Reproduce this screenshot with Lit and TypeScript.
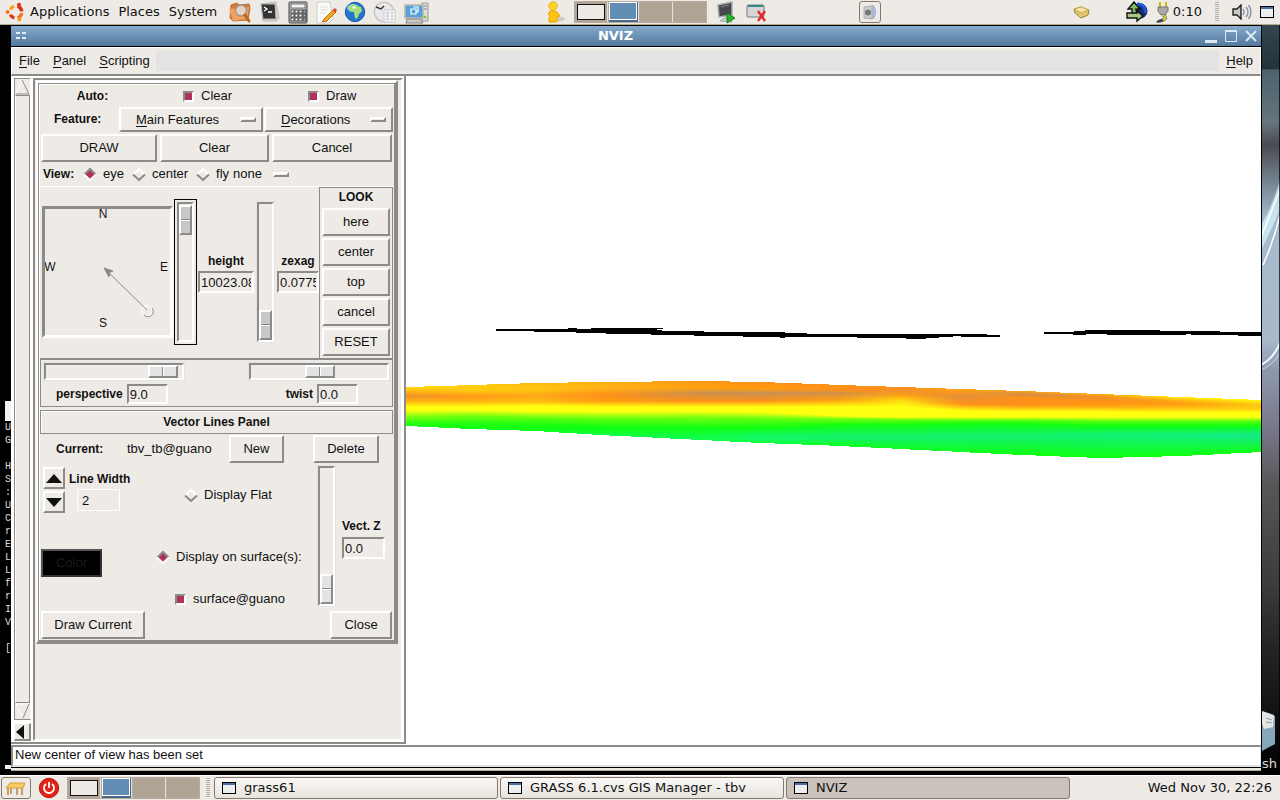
import { LitElement, html, css, svg } from "lit";
import { customElement } from "lit/decorators.js";

const diamond = (on: boolean) =>
  `url("data:image/svg+xml,${encodeURIComponent(
    `<svg xmlns='http://www.w3.org/2000/svg' width='14' height='14'><path d='M7 1L13 7L7 13L1 7Z' fill='${on ? "#b03060" : "#eeebe7"}'/><path d='M1.5 7.5L7 2L12.5 7.5' fill='none' stroke='${on ? "#8c8b89" : "#fff"}' stroke-width='2'/><path d='M1 7.5L7 13L13 7.5' fill='none' stroke='${on ? "#fff" : "#8c8b89"}' stroke-width='2'/></svg>`
  )}")`;

/* Top bar, bottom bar and their applets */
const icons = {
  ubuntu: svg`<svg width="20" height="20" viewBox="0 0 20 20" fill="none"><g stroke-width="3.4"><path d="M5.3 7.4A6 6 0 0 1 9 4.3" stroke="#f9a01b"/><path d="M12.5 4.2A6 6 0 0 1 16.7 9.5" stroke="#d9321e"/><path d="M16.7 11A6 6 0 0 1 12.6 15.8" stroke="#f47421"/><path d="M9.4 15.9A6 6 0 0 1 5.3 12.8" stroke="#d9321e"/></g><circle cx="2.6" cy="10" r="2" fill="#f47421"/><circle cx="14" cy="2.8" r="2" fill="#d9321e"/><circle cx="14.4" cy="17.4" r="2" fill="#f9a01b"/></svg>`,
  search: svg`<svg width="24" height="22" viewBox="0 0 24 22"><path d="M3 4l6-2 2 2 10-1 1 4-2 12-15 1L2 17z" fill="#d87a35" stroke="#b5703c"/><path d="M1 8l20-2-2 12-14 2z" fill="#f0a060"/><circle cx="13" cy="9.5" r="5.5" fill="#e3dedb" fill-opacity=".85" stroke="#a89484" stroke-width="1.5"/><path d="M17 14l4 6" stroke="#c0661a" stroke-width="3" stroke-linecap="round"/></svg>`,
  terminal: svg`<svg width="22" height="22" viewBox="0 0 22 22"><path d="M2 3l15-2 3 16-3 3H4z" fill="#d5d3cf" stroke="#bbb"/><path d="M2 3h14l1 15H4z" fill="#333" stroke="#b9b9b9"/><path d="M5 6l3 2-3 2M9 11h4" fill="none" stroke="#fff" stroke-width="1.3"/></svg>`,
  calc: svg`<svg width="20" height="23" viewBox="0 0 20 23"><rect x="1" y="1" width="18" height="21" rx="1" fill="#b9bfc3" stroke="#444"/><rect x="3" y="3" width="14" height="4" fill="#f2f4f1" stroke="#777"/>${[9, 13, 17].map((y) => [3, 7, 11, 15].map((x) => svg`<rect x=${x} y=${y} width="3" height="3" fill=${x === 15 ? "#9fb2bf" : "#f5f5f5"} stroke="#333" stroke-width=".8"/>`))}</svg>`,
  notes: svg`<svg width="22" height="23" viewBox="0 0 22 23"><path d="M2 1h13l3 17-4 4H2z" fill="#fbfbfa" stroke="#cfccc8"/><path d="M5 6h8M5 9h8M5 12h6" stroke="#ddd"/><path d="M19 8l-9 9-3 4 5-1 9-9z" fill="#f5a623" stroke="#c06d0c"/><path d="M18 9l2-2 2 2-2 3z" fill="#dc4b38"/></svg>`,
  globe: svg`<svg width="22" height="22" viewBox="0 0 22 22"><circle cx="11" cy="11" r="9.7" fill="#2277cc" stroke="#1b5ba4"/><ellipse cx="9" cy="7" rx="6" ry="4" fill="#76c6f4"/><path d="M5 5l5-2 3 2 4 1 1 4-3 3-2 5-2-1-1-6-4-1-2-3z" fill="#a9dc7c"/><path d="M8 6l3-1 1 2-3 1z" fill="#eef9df"/></svg>`,
  clockdoc: svg`<svg width="24" height="23" viewBox="0 0 24 23"><circle cx="11" cy="11" r="9.7" fill="#e9e9ea" stroke="#c5c6c9" stroke-width="1.5"/><path d="M3 6l5 2 3-3" stroke="#333" fill="none" stroke-width="1.4"/><path d="M11 9h11v12H11z" fill="#f5f5f6" stroke="#c8cad0"/><path d="M13 12h3M18 12h2M13 15h3M13 18h3M18 15h2M18 18h2" stroke="#cdd1d9" stroke-width="2"/></svg>`,
  monitors: svg`<svg width="26" height="23" viewBox="0 0 26 23"><path d="M18 2h6v18h-6z" fill="#dedfd9" stroke="#999"/><path d="M20 5h3M20 8h3" stroke="#888"/><rect x="1" y="4" width="18" height="13" fill="#58a0d8" stroke="#b7b9b4" stroke-width="1.6"/><path d="M7 8h5v5H7zM9 6h5v5h-2" fill="none" stroke="#fff" stroke-width="1.2"/><path d="M3 18h14l2 4H2z" fill="#c8c9c1" stroke="#888"/><circle cx="21" cy="16" r="1.5" fill="#7bd32c"/></svg>`,
  user: svg`<svg width="18" height="22" viewBox="0 0 18 22"><ellipse cx="12" cy="18" rx="6" ry="2.5" fill="#cfccc8"/><circle cx="6" cy="5" r="4.2" fill="#ffd42a" stroke="#f0b010"/><path d="M3 10q4-1 7 1l3 4-3 1v5H2v-4l1-2-2-2z" fill="#ffc414" stroke="#e8a400"/></svg>`,
  run: svg`<svg width="21" height="23" viewBox="0 0 21 23"><path d="M2 4l14-3v13l-13 2z" fill="#45494b" stroke="#a9aaa8" stroke-width="1.5"/><path d="M5 6l8-2" stroke="#888"/><path d="M4 20l4-3h6l2 4z" fill="#c9c9c6" stroke="#aaa"/><path d="M11 12l8 5-8 5z" fill="#26b52b" stroke="#138019"/></svg>`,
  killwin: svg`<svg width="21" height="20" viewBox="0 0 21 20"><rect x="1" y="3" width="17" height="12" rx="1" fill="#d4d6d5" stroke="#777"/><path d="M2 3h15v2H2z" fill="#348a84"/><path d="M12 9l7 10M19 9l-7 10" stroke="#e62222" stroke-width="2.3"/></svg>`,
  volumebox: svg`<svg width="18" height="16" viewBox="0 0 18 16"><path d="M3 3l8-1v13l-8-1z" fill="#ccc" stroke="#aaa"/><circle cx="7" cy="8.500" r="3" fill="#777"/><path d="M12 1q5 7 0 14z" fill="#b5c6e6" stroke="#94a9cf"/></svg>`,
  box: svg`<svg width="18" height="14" viewBox="0 0 18 14"><path d="M1 4l7-2 8 3-1 5-7 3-6-5z" fill="#e3c66b" stroke="#98813b"/><path d="M1 4l7 4 8-3-8-3z" fill="#f4e6a2" stroke="#c2a953"/></svg>`,
  sync: svg`<svg width="24" height="22" viewBox="0 0 24 22"><circle cx="15" cy="10" r="7.5" fill="#1b2b66"/><path d="M9 1l6 7h-3v5H7V8H3z" fill="#82b66b" stroke="#111" stroke-width="1.4"/><path d="M2 12h10l-1-3 7 6-6 5v-3H2z" fill="#a6c98b" stroke="#111" stroke-width="1.4"/><path d="M12 3q9 0 8 9" fill="none" stroke="#1b58e0" stroke-width="3"/></svg>`,
  plug: svg`<svg width="14" height="22" viewBox="0 0 14 22"><path d="M4 1v6M10 1v6" stroke="#c7b800" stroke-width="2"/><path d="M2 6h10v4l-3 4H5l-3-4z" fill="#a8a8a8" stroke="#777"/><path d="M7 14q5 3 0 5t-6 1" fill="none" stroke="#444" stroke-width="3"/><path d="M7 14q5 3 0 5" fill="none" stroke="#e5dd25" stroke-width="2"/></svg>`,
  speaker: svg`<svg width="21" height="16" viewBox="0 0 21 16"><path d="M2 5h4l4-4v14l-4-4H2z" fill="#c9cac8" stroke="#222" stroke-width="1.4"/><path d="M12 5q2 3 0 6M15 3q4 5 0 10M17.500 1q5 7 0 14" fill="none" stroke="#8f8faa" stroke-width="1.4"/></svg>`,
  win: svg`<svg width="16" height="14" viewBox="0 0 16 14"><rect x="1.5" y="1.5" width="13" height="11" fill="#eceef0" stroke="#000"/><path d="M2 3h12" stroke="#4a6fa0" stroke-width="2"/></svg>`,
  desk: svg`<svg width="22" height="16" viewBox="0 0 22 16"><path d="M6 6v8M17 7v8M3 7v8M12 8v7" stroke="#c08a4c" stroke-width="1.6"/><path d="M5 3h15l-2 5H1z" fill="#f7cb5d" stroke="#d29f38"/></svg>`,
  power: svg`<svg width="22" height="22" viewBox="0 0 22 22"><circle cx="11" cy="11" r="9.7" fill="#e42318" stroke="#b51710"/><path d="M8 7a5 5 0 1 0 6 0M11 5v6" fill="none" stroke="#fff" stroke-width="1.8"/></svg>`,
};

const shared = css`
  :host { box-sizing: border-box; font: 13px/16px "DejaVu Sans", sans-serif; color: #111; }
  * { box-sizing: border-box; }
  svg { display: block; flex: none; }
  button { font: inherit; color: inherit; margin: 0; padding: 0; border: 0; background: none; border-radius: 0; }
`;

@customElement("workspace-switcher")
class WorkspaceSwitcher extends LitElement {
  static styles = [shared, css`
    :host { display: flex; width: 133px; height: 22px; padding: 1px; background: #b9ac9c; gap: 1px; }
    .ws { flex: 1; background: #b0a595; padding: 2px; border-right: 1px solid #e5dfd7; }
    .ws:last-child { border-right: 0; }
    .ws.on { background: #48698a; padding: 0 1px 2px 0; }
    .mini { display: block; height: 100%; border: 1px solid #111; background: #eeebe7; }
    .on .mini { background: #628db5; border-color: #fff; }
  `];
  render() {
    return [1, 2, 3, 4].map((n) => html`<button class="ws ${n === 2 ? "on" : ""}" aria-label="Workspace ${n}">${n < 3 ? html`<span class="mini"></span>` : ""}</button>`);
  }
}

@customElement("top-panel")
class TopPanel extends LitElement {
  static styles = [shared, css`
    :host { display: flex; align-items: center; height: 25px; background: #eeebe7; border-bottom: 1px solid #b3aa8e; padding: 0 5px; }
    .group { display: flex; align-items: center; }
    .menus { gap: 9px; }
    .menus button:first-child { display: flex; align-items: center; gap: 5px; }
    .launch { gap: 7px; margin-left: 11px; }
    .gap-a { flex: 117; }
    .gap-b { flex: 191; }
    .mid { gap: 9px; }
    .vol { margin-left: 92px; width: 22px; height: 22px; border: 1px solid #85786a; border-radius: 3px; display: flex; align-items: center; justify-content: center; }
    .tray { gap: 7px; }
    .box { margin-right: 27px; }
    .time { margin-left: -4px; }
    .grip { width: 4px; height: 20px; margin: 0 5px 0 6px; background: repeating-linear-gradient(#b9aca0 0 1px, #eeebe7 1px 2px); }
  `];
  render() {
    return html`
      <nav class="group menus"><button>${icons.ubuntu}Applications</button><button>Places</button><button>System</button></nav>
      <div class="group launch">${icons.search}${icons.terminal}${icons.calc}${icons.notes}${icons.globe}${icons.clockdoc}${icons.monitors}</div>
      <span class="gap-a"></span>
      <div class="group mid">${icons.user}<workspace-switcher></workspace-switcher>${icons.run}${icons.killwin}</div>
      <button class="vol" aria-label="Volume">${icons.volumebox}</button>
      <span class="gap-b"></span>
      <div class="group tray"><span class="box">${icons.box}</span>${icons.sync}${icons.plug}<span class="time">0:10</span><span class="grip"></span>${icons.speaker}${icons.win}</div>`;
  }
}

@customElement("task-panel")
class TaskPanel extends LitElement {
  static styles = [shared, css`
    :host { display: flex; align-items: center; height: 25px; background: #eeebe7; border-top: 1px solid #fff; padding: 0 8px 0 1px; }
    .desk { width: 30px; height: 22px; border: 1px solid #85786a; border-radius: 3px; display: flex; align-items: center; justify-content: center; }
    .power { margin: 0 7px; }
    .grip { width: 4px; height: 20px; margin: 0 4px 0 6px; background: repeating-linear-gradient(#b9aca0 0 1px, #eeebe7 1px 2px); }
    .tasks { display: flex; flex: 1; gap: 2px; }
    .task { flex: 0 1 284px; height: 22px; padding: 0 6px; display: flex; align-items: center; gap: 7px; border: 1px solid #85786a; border-radius: 3px; background: linear-gradient(#faf9f7, #e7e2dc); }
    .task.on { background: #c9c3bc; }
  `];
  render() {
    return html`
      <button class="desk" aria-label="Show desktop">${icons.desk}</button>
      <button class="power" aria-label="Power">${icons.power}</button>
      <workspace-switcher></workspace-switcher><span class="grip"></span>
      <div class="tasks">
        <button class="task">${icons.win}grass61</button>
        <button class="task">${icons.win}GRASS 6.1.cvs GIS Manager - tbv</button>
        <button class="task on">${icons.win}NVIZ</button>
      </div>
      <time>Wed Nov 30, 22:26</time>`;
  }
}

/* Terrain cross-section: each column lists the height of every colour band */
type Column = { x: number; y: number[]; c: string[] };
const col = (x: number, spec: string): Column => {
  const parts = spec.split(" ").map((p) => p.split(":"));
  return { x, y: parts.map((p) => +p[0]), c: parts.map((p) => p[1]) };
};
const terrain: Column[] = [
  col(406, "387:ffe010 392:ffb010 396:f09030 401:ffb010 407:ffff10 410:ffff10 416:90ff10 421:40ff10 424:20ff10 426:10ff20"),
  col(470, "385:ffd010 391:ffc810 396:ff9818 401:ffb010 407:ffff10 410:ffff10 416:70ff10 422:30ff10 426:18ff10 429:10ff18"),
  col(533, "383:ffb810 389:ffc810 396:ffa818 402:ffc010 406:ffff10 411:ffff10 418:60ff10 425:18ff10 428:10ff10 431:10ff20"),
  col(600, "382:ffb010 388:ffb418 395:ff9018 401:ff9c10 407:ffff10 411:ffff10 419:60ff10 427:10ff10 431:10ff20 435:10ff48"),
  col(700, "381:ff9818 388:ffa010 393:c89050 401:ff9018 407:ffff10 411:ffff10 418:70ff10 428:10ff10 435:10ff40 440:10ff50"),
  col(760, "382:ff9018 389:ff9c10 393:c89058 401:ff9018 407:ffff10 412:ffff10 419:60ff10 428:10ff10 437:14f870 443:10ff40"),
  col(840, "385:ff9018 390:ff9018 393:d09048 400:ffa010 407:ffff10 416:ffff10 419:70ff10 425:10ff10 437:14f070 446:10ff20"),
  col(900, "387:ff9018 391:f09030 395:ffa010 401:ffe010 407:ffff10 417:ffff10 420:60ff10 425:10ff10 437:14f070 449:10ff20"),
  col(960, "389:ffa818 392:ff9818 396:e09040 404:ff9018 411:ffff10 417:ffff10 420:60ff10 424:10ff10 436:14f070 452:10ff20"),
  col(1020, "391:ffa018 394:d09048 398:ff9018 405:ff9018 412:ffff10 417:ffff10 420:60ff10 424:10ff10 436:14f070 455:10ff10"),
  col(1100, "394:ffb010 397:f09028 401:ff9018 406:ffa010 412:ffff10 417:ffff10 421:60ff10 426:10ff10 435:14f078 458:10ff10"),
  col(1180, "397:fff010 401:ffb010 404:ff9810 408:ffc010 413:ffff10 417:ffff10 421:60ff10 426:10ff10 435:14f080 456:10ff10"),
  col(1261, "400:ffff10 403:ffd810 405:ffc810 409:ffd010 413:ffff10 417:ffff10 421:60ff10 426:10ff10 435:14e890 452:10ff10"),
];
const lerp = (a: number, b: number, t: number) => a + (b - a) * t;
const mix = (a: string, b: string, t: number) =>
  `rgb(${[0, 2, 4].map((i) => Math.round(lerp(parseInt(a.slice(i, i + 2), 16), parseInt(b.slice(i, i + 2), 16), t))).join()})`;
const sample = (x: number) => {
  let i = 0;
  while (i < terrain.length - 2 && terrain[i + 1].x <= x) i++;
  const a = terrain[i], b = terrain[i + 1], t = Math.min(1, (x - a.x) / (b.x - a.x));
  return a.y.map((y, k) => ({ y: lerp(y, b.y[k], t), c: mix(a.c[k], b.c[k], t) }));
};

@customElement("terrain-view")
class TerrainView extends LitElement {
  static styles = [shared, css`
    :host { display: block; background: #fff; overflow: hidden; }
    svg { width: 100%; height: 100%; }
  `];
  render() {
    const step = 3, strips = [];
    for (let x = 406; x < 1261; x += step) {
      const s = sample(x), top = s[0].y, h = s[9].y - top;
      strips.push(svg`<linearGradient id="g${x}" x2="0" y2="1">${s.map((p) => svg`<stop offset=${(p.y - top) / h} stop-color=${p.c}/>`)}</linearGradient><rect x=${x} y=${top} width=${step} height=${h} fill="url(#g${x})"/>`);
    }
    return html`<svg viewBox="406 76 855 668" preserveAspectRatio="xMinYMin slice" shape-rendering="crispEdges">
      ${svg`<g>${strips}</g>`}
      <path d="M496 329H568V328H577V329H591V328H663V329H657V330H662V331H704V332H785V333H807V334H987V335H1000V337H961V336H953V337H939V338H926V339H906V338H857V337H785V338H780V337H743V336H694V335H651V334H606V333H576V332H534V331H496Z"/>
      <path d="M1044 332H1074V331H1085V330H1160V331H1220V332H1261V336H1238V335H1191V334H1186V335H1107V334H1086V335H1073V334H1044Z"/>
    </svg>`;
  }
}

/* The control column of the NVIZ window */
@customElement("control-panel")
class ControlPanel extends LitElement {
  static styles = [shared, css`
    :host { display: block; background: #eeebe7; border: 2px solid; border-color: #8c8b89 #fff #fff #8c8b89; padding: 0 3px 3px 1px; font: 13px/16px "Liberation Sans", Arial, sans-serif; }
    b, .b { font-weight: bold; font-size: 12px; }
    u { text-underline-offset: 2px; }
    .frame { border: 3px solid; border-color: #fff #8c8b89 #8c8b89 #fff; border-left-width: 2px; }
    .groove { border: 1px solid #8c8b89; box-shadow: inset 1px 1px #fff; padding: 1px; }
    .row { display: flex; align-items: center; }
    .btn { height: 28px; border: 2px solid; border-color: #fff #8c8b89 #8c8b89 #fff; background: #eeebe7; text-align: center; white-space: nowrap; }
    label { display: flex; align-items: center; }
    .check input { appearance: none; width: 11px; height: 11px; margin: 0 7px 0 0; border: 2px solid; border-color: #8c8b89 #fff #fff #8c8b89; background: #b03060; }
    .radio input { appearance: none; width: 14px; height: 14px; margin: 0 6px 0 0; background: var(--off); }
    .radio input:checked { background: var(--on); }
    .auto { display: grid; grid-template-columns: 143px 125px 1fr; height: 22px; align-items: center; }
    .auto b { text-align: center; padding-right: 38px; }
    .feature { height: 27px; align-items: flex-start; }
    .feature b { width: 79px; padding: 4px 0 0 14px; }
    .menu { height: 25px; display: flex; align-items: center; justify-content: space-between; padding: 0 5px 0 15px; }
    .dash { width: 16px; height: 5px; border: 2px solid; border-color: #fff #8c8b89 #8c8b89 #fff; }
    .main { width: 144px; }
    .deco { flex: 1; margin-left: 1px; }
    .acts { gap: 3px; padding: 0 1px; display: grid; grid-template-columns: 116px 109px 1fr; }
    .view { height: 24px; padding-left: 3px; }
    .view b { width: 40px; }
    .view label { margin-right: 8px; }
    .view .last { margin-right: 4px; }
    .view select { appearance: none; font: inherit; color: inherit; border: 0; padding: 0; margin: 0; background: none; width: 40px; }
    .pos { display: flex; height: 172px; border-top: 1px solid #fff; }
    .compass { margin: 19px 1px 0 2px; width: 131px; height: 132px; border: 3px solid; border-color: #8c8b89 #fff #fff #8c8b89; }
    .compass text { font-size: 12px; fill: #111; text-anchor: middle; }
    input[type="range"] { appearance: none; margin: 0; background: #eeebe7; border: 2px solid; border-color: #8c8b89 #fff #fff #8c8b89; box-shadow: 0 0 0 1px #e3e3e3; width: 140px; height: 17px; flex: none; }
    input[type="range"]::-webkit-slider-thumb { appearance: none; width: 30px; height: 13px; border: 2px solid; border-color: #fff #8c8b89 #8c8b89 #fff; background: linear-gradient(90deg, transparent 12px, #8c8b89 12px 13px, #fff 13px 14px, transparent 14px), #e3e3e3; }
    input[type="range"].vert { writing-mode: vertical-lr; width: 17px; height: 140px; }
    input[type="range"].vert::-webkit-slider-thumb { width: 13px; height: 30px; background: linear-gradient(transparent 12px, #8c8b89 12px 13px, #fff 13px 14px, transparent 14px), #e3e3e3; }
    .pos input[type="range"].vert::-webkit-slider-thumb { background: linear-gradient(transparent 12px, #8c8b89 12px 13px, #fff 13px 14px, transparent 14px), #c8c8c8; }
    input[type="range"].focus { margin: 15px 3px 0; box-shadow: 0 0 0 2px #eeebe7, 0 0 0 3px #000; }
    input[type="range"].zex { margin: 15px 3px 0 2px; }
    input.entry { font: inherit; color: inherit; height: 22px; border: 2px solid; border-color: #8c8b89 #fff #fff #8c8b89; border-radius: 0; background: #eeebe7; padding: 0 1px; margin: 0; }
    .field { display: flex; flex-direction: column; align-items: center; gap: 2px; margin-top: 66px; }
    .hgt { width: 58px; }
    .hgt .entry { width: 56px; }
    .zx { flex: 1; min-width: 0; }
    .zx .entry { width: 42px; }
    .look { width: 74px; height: 171px; border: 1px solid #8c8b89; border-bottom: 0; padding: 1px 2px; display: flex; flex-direction: column; gap: 2px; text-align: center; }
    .look b { padding-bottom: 1px; }
    .look .btn { width: 68px; flex: none; }
    .persp { height: 49px; border: 1px solid #8c8b89; border-top-width: 2px; padding: 3px 3px 0; }
    .sp { justify-content: space-between; }
    .persp .row + .row { padding: 4px 31px 0 12px; }
    .persp label { gap: 4px; }
    .persp .entry { width: 41px; height: 20px; }
    .title { margin-top: 3px; height: 24px; display: flex; align-items: center; justify-content: center; border: 1px solid #8c8b89; box-shadow: inset 1px 1px #fff; }
    .cur { height: 30px; margin-bottom: 2px; padding: 0 14px 0 16px; }
    .cur b { width: 71px; }
    .cur span { width: 102px; }
    .new { width: 55px; margin-right: auto; }
    .del { width: 66px; }
    .body { display: grid; grid-template-columns: 118px 1fr 20px 55px; height: 144px; }
    .lw { display: grid; grid-template-columns: 22px 1fr; column-gap: 4px; padding: 1px 0 0 3px; align-content: start; }
    .spins { display: grid; gap: 2px; }
    .spin { width: 22px; height: 22px; border: 2px solid; border-color: #fff #8c8b89 #8c8b89 #fff; display: flex; align-items: center; justify-content: center; }
    .lw label { flex-direction: column; align-items: flex-start; gap: 2px; padding-top: 4px; white-space: nowrap; }
    input.two { width: 43px; margin-left: 8px; border: 1px solid #fff; padding: 0 4px; }
    .color { width: 61px; margin: 36px 0 0 -2px; background: #000; border-color: #555 #333 #333 #555; color: #1c1c1c; grid-column: 1 / 3; }
    .mid { display: grid; align-content: start; padding-top: 21px; white-space: nowrap; }
    .flat { margin: 0 0 46px 26px; }
    .onsurf { margin: 0 0 26px -2px; }
    .surf { margin-left: 17px; }
    .vz { padding: 52px 0 0 4px; }
    .vz input { width: 43px; }
    .vz label { flex-direction: column; align-items: flex-start; gap: 3px; white-space: nowrap; }
    .foot { display: flex; justify-content: space-between; padding: 1px 1px 0; height: 29px; }
    .dc { width: 104px; }
    .close { width: 62px; }
  `];
  render() {
    return html`<style>:host { --on: ${diamond(true)}; --off: ${diamond(false)}; }</style>
    <div class="frame"><div class="groove">
      <div class="auto"><b>Auto:</b><label class="check"><input type="checkbox" checked>Clear</label><label class="check"><input type="checkbox" checked>Draw</label></div>
      <div class="row feature"><b>Feature:</b><button class="btn menu main" aria-haspopup="menu"><span><u>M</u>ain Features</span><i class="dash"></i></button><button class="btn menu deco" aria-haspopup="menu"><span><u>D</u>ecorations</span><i class="dash"></i></button></div>
      <div class="acts"><button class="btn">DRAW</button><button class="btn">Clear</button><button class="btn">Cancel</button></div>
      <div class="row view"><b>View:</b>
        <label class="radio"><input type="radio" name="view" checked>eye</label><label class="radio"><input type="radio" name="view">center</label><label class="radio last"><input type="radio" name="view">fly</label>
        <select aria-label="Fly mode"><option>none</option></select><i class="dash"></i></div>
      <div class="pos">
        <svg class="compass" viewBox="0 0 125 126"><text x="58" y="9">N</text><text x="5" y="62">W</text><text x="119" y="62">E</text><text x="58" y="118">S</text><path d="M102 101L63 63" stroke="#8c8b89"/><path d="M59 59l9 3-3 1-1 5z" fill="#8c8b89" stroke="#8c8b89"/><circle cx="102" cy="102" r="5" fill="none" stroke="#fff"/><path d="M107 99a5 5 0 0 1-8 7" fill="none" stroke="#8c8b89"/></svg>
        <input class="vert focus" type="range" aria-label="Height" value="1">
        <label class="field hgt"><span class="b">height</span><input class="entry" value="10023.08"></label>
        <input class="vert zex" type="range" aria-label="Z exaggeration" value="100">
        <label class="field zx"><span class="b">zexag</span><input class="entry" value="0.0775"></label>
        <div class="look"><b>LOOK</b>${["here", "center", "top", "cancel", "RESET"].map((t) => html`<button class="btn">${t}</button>`)}</div>
      </div>
      <div class="persp">
        <div class="row sp"><input type="range" aria-label="Perspective" value="96"><input type="range" aria-label="Twist" value="51"></div>
        <div class="row sp"><label><span class="b">perspective</span><input class="entry" value="9.0"></label><label><span class="b">twist</span><input class="entry" value="0.0"></label></div>
      </div>
      <div class="title"><b>Vector Lines Panel</b></div>
      <div class="row cur"><b>Current:</b><span>tbv_tb@guano</span><button class="btn new">New</button><button class="btn del">Delete</button></div>
      <div class="body">
        <div class="lw">
          <div class="spins"><button class="spin" aria-label="Wider"><svg width="16" height="9"><path d="M0 9L8 0L16 9Z" fill="#111"/></svg></button><button class="spin" aria-label="Narrower"><svg width="16" height="9"><path d="M0 0L8 9L16 0Z" fill="#111"/></svg></button></div>
          <label><span class="b">Line Width</span><input class="entry two" value="2"></label>
          <button class="btn color">Color</button>
        </div>
        <div class="mid"><label class="radio flat"><input type="radio" name="disp">Display Flat</label><label class="radio onsurf"><input type="radio" name="disp" checked>Display on surface(s):</label><label class="check surf"><input type="checkbox" checked>surface@guano</label></div>
        <input class="vert" type="range" aria-label="Vector Z" value="100">
        <div class="vz"><label><span class="b">Vect. Z</span><input class="entry" value="0.0"></label></div>
      </div>
      <div class="foot"><button class="btn dc">Draw Current</button><button class="btn close">Close</button></div>
    </div></div>`;
  }
}

@customElement("nviz-window")
class NvizWindow extends LitElement {
  static styles = [shared, css`
    :host { display: flex; flex-direction: column; background: #eeebe7; border: 1px solid #000; border-left: 0; }
    .bar { display: flex; align-items: center; height: 21px; padding: 0 3px 0 4px; background: linear-gradient(#86abcf, #52789c); border-bottom: 1px solid #000; color: #fff; }
    .name { flex: 1; text-align: center; font-weight: bold; }
    .ctl { display: flex; gap: 6px; }
    .menus { display: flex; height: 29px; border: 1px solid #fff; border-bottom: 2px solid #8c8b89; font: 13px/16px "Liberation Sans", Arial, sans-serif; align-items: center; padding: 0 7px; }
    .menus button { margin-right: 13px; }
    .menus u { text-underline-offset: 2px; }
    .fill { flex: 1; height: 20px; margin: 0 7px 0 -7px; background: #e3e3e3; }
    .menus .help { margin: 0; }
    .work { flex: 1; min-height: 0; display: flex; background: #fff; }
    .side { display: flex; width: 395px; flex: none; border: solid #8c8b89; border-width: 0 2px 2px 0; padding: 2px 1px 1px 3px; gap: 2px; background: #fff; }
    .scroll { width: 17px; display: flex; flex-direction: column; }
    .trough { flex: 1; border: 1px solid #8c8b89; display: flex; flex-direction: column; background: #eeebe7; border-right-color: #fff; }
    .thumb { flex: 1; border: 1px solid; border-color: #8c8b89 #8c8b89 #8c8b89 #fff; }
    .left { height: 18px; margin-top: 3px; border: 1px solid; border-width: 1px 2px 2px 1px; border-color: #fff #8c8b89 #8c8b89 #fff; background: #eeebe7; display: flex; align-items: center; }
    control-panel { flex: 1; min-width: 0; }
    terrain-view { flex: 1; min-width: 0; }
    .status { height: 22px; padding: 0 2px; background: #fff; border: solid #8c8b89; border-width: 2px 1px 2px 2px; border-right-color: #e3e3e3; border-bottom-color: #e3e3e3; font: 13px/16px "Liberation Sans", Arial, sans-serif; box-shadow: 0 -1px #fff; margin-top: 1px; }
    .edge { height: 4px; border-top: 1px solid #000; border-bottom: 1px solid #b3aa9e; background: #eeebe7; }
    :host { border-bottom-width: 0; }
  `];
  render() {
    return html`
      <div class="bar"><svg width="12" height="8"><path d="M1 1h4M7 1h4M1 6h4M7 6h4" stroke="#e4edf5" stroke-width="2"/></svg><span class="name">NVIZ</span>
        <span class="ctl"><svg width="14" height="14"><path d="M1 12.500h12" stroke="#dce8f3" stroke-width="3"/></svg><svg width="14" height="14"><path d="M1.500 2.500h11v10h-11z" fill="none" stroke="#dce8f3"/><path d="M1 2h12" stroke="#dce8f3" stroke-width="2"/></svg><svg width="14" height="14"><path d="M2 2l10 10M12 2L2 12" stroke="#dce8f3" stroke-width="2"/></svg></span></div>
      <nav class="menus"><button><u>F</u>ile</button><button><u>P</u>anel</button><button><u>S</u>cripting</button><span class="fill"></span><button class="help"><u>H</u>elp</button></nav>
      <div class="work">
        <div class="side">
          <div class="scroll"><div class="trough"><svg width="15" height="16"><path d="M1 15L7 1" stroke="#fff"/><path d="M7 1L14 15H1" fill="none" stroke="#8c8b89"/></svg><div class="thumb"></div><svg width="15" height="16"><path d="M8 15L1 1H14" fill="none" stroke="#fff"/><path d="M8 15L14 1" stroke="#8c8b89"/></svg></div>
            <button class="left" aria-label="Collapse"><svg width="10" height="14"><path d="M9 0L1 7L9 14Z" fill="#111"/></svg></button></div>
          <control-panel></control-panel>
        </div>
        <terrain-view></terrain-view>
      </div>
      <div class="status">New center of view has been set</div>
      <div class="edge"></div>`;
  }
}

@customElement("app-root")
class AppRoot extends LitElement {
  static styles = [shared, css`
    :host { display: flex; flex-direction: column; height: 100vh; overflow: hidden; background: #000; }
    top-panel, task-panel { flex: none; }
    .desktop { position: relative; flex: 1; min-height: 0; display: flex; padding: 0 18px 4px 11px; overflow: hidden; }
    .wall { position: absolute; right: 0; top: 0; width: 19px; height: 100%; }
    nviz-window { position: relative; flex: 1; min-width: 0; }
    .term { position: absolute; left: 5px; top: 376px; width: 6px; height: 368px; color: #ddd; font: 10px/13px "Liberation Mono", monospace; white-space: pre; margin: 0; border-top: 20px solid #f4f1ee; padding-top: 0; border-bottom: 4px solid #eee; }
    .trash { position: absolute; right: 4px; top: 686px; width: 14px; height: 64px; }
    .trash svg { margin-bottom: 3px; }
    .trash span { color: #ddd; }
  `];
  render() {
    return html`<top-panel></top-panel>
      <main class="desktop">
        <svg class="wall" viewBox="0 0 19 750" preserveAspectRatio="none">
          <linearGradient id="w" x2="0" y2="1"><stop offset="0" stop-color="#35454d"/><stop offset=".058" stop-color="#22333b"/><stop offset=".06" stop-color="#4b626d"/><stop offset=".13" stop-color="#66757e"/><stop offset=".16" stop-color="#4a4a50"/><stop offset=".2" stop-color="#6c7a86"/><stop offset=".26" stop-color="#a6bccd"/><stop offset=".42" stop-color="#a9b8cc"/><stop offset=".46" stop-color="#8e98ad"/><stop offset=".54" stop-color="#77778a"/><stop offset=".61" stop-color="#58585a"/><stop offset=".75" stop-color="#3c3a3a"/><stop offset=".83" stop-color="#242426"/><stop offset=".97" stop-color="#060608"/><stop offset="1" stop-color="#000"/></linearGradient>
          <rect width="19" height="750" fill="url(#w)"/>
          <path d="M0 200Q10 185 19 155V185Q8 210 0 225Z" fill="#d6f1fa" opacity=".75"/><path d="M0 212L19 165M2 240Q13 215 19 190" fill="none" stroke="#fff" stroke-width="1.5"/><path d="M0 340Q12 334 19 318" fill="none" stroke="#eefaff" stroke-width="2"/><path d="M0 345Q12 340 19 328" fill="none" stroke="#bfe0ee"/><path d="M0 400L19 384" stroke="#8f7484"/>
          <path d="M18.500 0V750" stroke="#000" opacity=".7"/>
        </svg>
        <pre class="term">${"U\nG\n\nH\nS\n:\nU\nC\nr\nE\nL\nL\nf\nr\nI\nV\n\n["}</pre>
        <nviz-window></nviz-window>
        <div class="trash"><svg width="14" height="42"><path d="M0 3l13 2v28L0 40z" fill="#86a6bb"/><path d="M0 0l12 4-1 12-9 2-2-6z" fill="#e4e6e6"/><path d="M4 7l6 2M4 11l6 1" stroke="#999"/></svg><span>sh</span></div>
      </main>
      <task-panel></task-panel>`;
  }
}
